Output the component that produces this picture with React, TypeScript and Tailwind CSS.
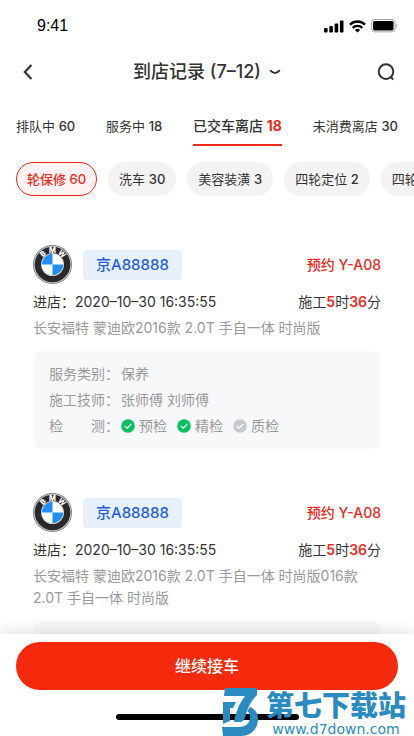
import React, { useState } from 'react'

interface CountItem {
  id: string
  label: string
  count: number
}

interface Check {
  label: string
  done: boolean
}

interface ServiceRecord {
  id: string
  plate: string
  booking: string
  arrivedAt: string
  hours: number
  minutes: number
  model: string
  category: string
  technicians: string
  checks: Check[]
}

const tabs: CountItem[] = [
  { id: 'queue', label: '排队中', count: 60 },
  { id: 'serving', label: '服务中', count: 18 },
  { id: 'delivered', label: '已交车离店', count: 18 },
  { id: 'unpaid', label: '未消费离店', count: 30 },
]

const filters: CountItem[] = [
  { id: 'maintain', label: '轮保修', count: 60 },
  { id: 'wash', label: '洗车', count: 30 },
  { id: 'decor', label: '美容装潢', count: 3 },
  { id: 'align', label: '四轮定位', count: 2 },
  { id: 'align-more', label: '四轮定位', count: 2 },
]

const checks: Check[] = [
  { label: '预检', done: true },
  { label: '精检', done: true },
  { label: '质检', done: false },
]

const records: ServiceRecord[] = [
  {
    id: '1',
    plate: '京A88888',
    booking: 'Y-A08',
    arrivedAt: '2020–10–30 16:35:55',
    hours: 5,
    minutes: 36,
    model: '长安福特 蒙迪欧2016款 2.0T 手自一体 时尚版',
    category: '保养',
    technicians: '张师傅 刘师傅',
    checks,
  },
  {
    id: '2',
    plate: '京A88888',
    booking: 'Y-A08',
    arrivedAt: '2020–10–30 16:35:55',
    hours: 5,
    minutes: 36,
    model: '长安福特 蒙迪欧2016款 2.0T 手自一体 时尚版016款 2.0T 手自一体 时尚版',
    category: '保养',
    technicians: '张师傅 刘师傅',
    checks,
  },
]

function StatusBar() {
  return (
    <div className="flex items-center justify-between pt-4 pr-4 pl-[37px]">
      <span className="font-['Liberation_Sans',sans-serif] text-base leading-5 text-black">9:41</span>
      <div className="flex items-center gap-[5px]">
        <svg width="20" height="13" viewBox="0 0 20 13" aria-hidden="true">
          <rect x="0" y="8" width="3.6" height="4.4" rx="1" />
          <rect x="5.3" y="6" width="3.6" height="6.4" rx="1" />
          <rect x="10.6" y="3.4" width="3.6" height="9" rx="1" />
          <rect x="15.9" y="0.6" width="3.6" height="11.8" rx="1" />
        </svg>
        <svg width="17" height="13" viewBox="0 0 17 13" fill="none" stroke="#000" strokeWidth="2.3" aria-hidden="true">
          <path d="M.9 4.6a10.9 10.9 0 0 1 15.2 0" />
          <path d="M3.7 7.8a6.9 6.9 0 0 1 9.6 0" />
          <path d="M5.9 10a3.9 3.9 0 0 1 5.2 0L8.5 12.6z" fill="#000" stroke="none" />
        </svg>
        <svg width="27" height="14" viewBox="0 0 27 14" aria-hidden="true">
          <rect x="0.5" y="0.5" width="23.6" height="12.4" rx="3.2" fill="none" stroke="#a8a8a8" />
          <rect x="2" y="2" width="20.6" height="9.4" rx="1.6" />
          <path d="M25.3 4.6c1.5.6 1.5 3.6 0 4.2z" fill="#a8a8a8" />
        </svg>
      </div>
    </div>
  )
}

function Header() {
  return (
    <header className="flex items-center justify-between px-4 pt-5">
      <button type="button" aria-label="返回" className="flex size-8 items-center pl-[7px]">
        <svg width="10" height="16" viewBox="0 0 10 16" fill="none" stroke="#333" strokeWidth="2.2">
          <path d="M8.4 1 1.8 8l6.6 7" />
        </svg>
      </button>
      <h1>
        <button type="button" className="flex items-center gap-2 text-lg leading-6 font-medium text-[#333]">
          到店记录 (7–12)
          <svg width="12" height="6" viewBox="0 0 12 6" fill="none" stroke="#333" strokeWidth="2" aria-hidden="true">
            <path d="M1.2 1.2C3 2.900 4.600 4 6 4s3-1.100 4.800-2.800" />
          </svg>
        </button>
      </h1>
      <button type="button" aria-label="搜索" className="flex size-8 items-center justify-end pr-[3px]">
        <svg width="18" height="18" viewBox="0 0 18 18" fill="none" stroke="#333" strokeWidth="2">
          <circle cx="9" cy="8.6" r="7.3" />
          <path d="m13.4 13.4 2.8 3.2" />
        </svg>
      </button>
    </header>
  )
}

function BrandLogo() {
  return (
    <svg width="39" height="39" viewBox="0 0 40 40" role="img" aria-label="BMW">
      <circle cx="20" cy="20" r="20" fill="#77777a" />
      <circle cx="20" cy="20" r="19.2" fill="#cfcfd2" />
      <circle cx="20" cy="20" r="18.3" fill="#2a2828" />
      <circle cx="20" cy="20" r="11.8" fill="#d6d6d8" />
      <circle cx="20" cy="20" r="10.9" fill="#fff" />
      <path d="M20 20V9.1A10.9 10.9 0 0 0 9.1 20z" fill="#1f8ff5" />
      <path d="M20 20v10.9A10.9 10.9 0 0 0 30.9 20z" fill="#1f8ff5" />
      <g fill="#fff" fontSize="7.5" fontWeight="800" textAnchor="middle" fontFamily="Inter, sans-serif">
        <text x="20" y="7.9" transform="rotate(-42 20 20)">B</text>
        <text x="20" y="7.9">M</text>
        <text x="20" y="7.9" transform="rotate(42 20 20)">W</text>
      </g>
    </svg>
  )
}

function CheckMark({ done }: { done: boolean }) {
  return (
    <svg width="14" height="14" viewBox="0 0 14 14" fill="none" aria-hidden="true">
      <circle cx="7" cy="7" r="6.8" fill={done ? '#07c160' : '#c8c9cc'} />
      <path d="m3.9 7 2.2 2.2 4.2-4.2" stroke="#fff" strokeWidth="1.2" />
    </svg>
  )
}

function RecordCard({ record }: { record: ServiceRecord }) {
  return (
    <article className="text-sm leading-[22px]">
      <div className="flex items-center">
        <BrandLogo />
        <span className="ml-[11px] rounded bg-[#e8f0fc] px-[13px] py-1 text-[15px] leading-[22px] font-medium text-[#1f5fd6]">
          {record.plate}
        </span>
        <span className="ml-auto font-medium text-[#ee2a1b]">预约 {record.booking}</span>
      </div>
      <div className="mt-[7px] flex justify-between text-[#333]">
        <span>进店：{record.arrivedAt}</span>
        <span>
          施工<b className="font-semibold text-[#ee2a1b]">{record.hours}</b>时
          <b className="font-semibold text-[#ee2a1b]">{record.minutes}</b>分
        </span>
      </div>
      <p className="mt-1 text-[#999]">{record.model}</p>
      <dl className="mt-3 rounded-[10px] bg-[#f7f8fa] px-4 py-[10px] leading-[26px] text-[#999]">
        <div className="flex">
          <dt>服务类别：</dt>
          <dd className="ml-[2px]">{record.category}</dd>
        </div>
        <div className="flex">
          <dt>施工技师：</dt>
          <dd className="ml-[2px]">{record.technicians}</dd>
        </div>
        <div className="flex">
          <dt className="flex w-[70px] justify-between">
            <span>检</span>
            <span>测：</span>
          </dt>
          <dd className="ml-[2px] flex gap-[10px]">
            {record.checks.map(check => (
              <span key={check.label} className="flex items-center gap-1">
                <CheckMark done={check.done} />
                {check.label}
              </span>
            ))}
          </dd>
        </div>
      </dl>
    </article>
  )
}

function SiteMark() {
  return (
    <div className="pointer-events-none absolute right-2 bottom-0 flex items-end gap-2 text-[#2a8bc0]">
      <svg width="36" height="48" viewBox="0 0 36 48" fill="currentColor" aria-hidden="true">
        <path d="M3 0h32v7c-6 6-9 12-11 19-1 5-3 8-6 8h-6c2-10 5-18 11-26H2z" />
        <path d="M1 14h13l-3 6H8v13l-7 3z" />
        <path d="M28 19c5 2 8 6 8 12 0 10-7 17-17 17H1l-1-9h17c7 0 11-4 11-10 0-3-1-5-3-6z" />
      </svg>
      <div className="flex flex-col">
        <span className="text-[28px] leading-[32px] font-black">第七下载站</span>
        <span className="text-center font-['DejaVu_Sans',sans-serif] text-sm leading-[14px]">www.d7down.com</span>
      </div>
    </div>
  )
}

export default function App() {
  const [activeTab, setActiveTab] = useState('delivered')
  const [activeFilter, setActiveFilter] = useState('maintain')

  return (
    <div className="flex h-screen flex-col bg-white font-['Inter','Noto_Sans_CJK_SC',sans-serif]">
      <StatusBar />
      <Header />

      <nav className="mt-5 flex justify-between px-4">
        {tabs.map(tab => {
          const active = tab.id === activeTab
          return (
            <button
              key={tab.id}
              type="button"
              onClick={() => setActiveTab(tab.id)}
              className={`border-b-2 pt-2 pb-2 leading-5 whitespace-nowrap text-[#333] ${
                active ? 'border-[#ee2a1b] text-sm font-medium' : 'border-transparent text-[13px]'
              }`}
            >
              {tab.label} <b className={active ? 'font-bold text-[#ee2a1b]' : 'font-medium'}>{tab.count}</b>
            </button>
          )
        })}
      </nav>

      <div className="mt-4 flex shrink-0 gap-[11px] overflow-x-auto px-4 [scrollbar-width:none]">
        {filters.map(filter => {
          const active = filter.id === activeFilter
          return (
            <button
              key={filter.id}
              type="button"
              onClick={() => setActiveFilter(filter.id)}
              className={`shrink-0 rounded-full border px-[10px] py-[6px] text-[13px] leading-5 ${
                active
                  ? 'border-[#ee2a1b] bg-[#fff2f0] font-medium text-[#ee2a1b]'
                  : 'border-transparent bg-[#f3f3f3] text-[#333]'
              }`}
            >
              {filter.label} <b className="font-medium">{filter.count}</b>
            </button>
          )
        })}
      </div>

      <main className="mt-[49px] flex min-h-0 flex-1 flex-col gap-11 overflow-y-auto px-[33px] [scrollbar-width:none]">
        {records.map(record => (
          <RecordCard key={record.id} record={record} />
        ))}
      </main>

      <footer className="relative bg-white px-4 pt-2 pb-4 shadow-[0_-4px_14px_rgba(0,0,0,0.1)]">
        <button
          type="button"
          className="h-12 w-full rounded-full bg-[#f5290c] text-base font-medium text-white"
        >
          继续接车
        </button>
        <div className="mx-auto mt-6 h-[6px] w-[183px] rounded-full bg-black" />
        <SiteMark />
      </footer>
    </div>
  )
}
